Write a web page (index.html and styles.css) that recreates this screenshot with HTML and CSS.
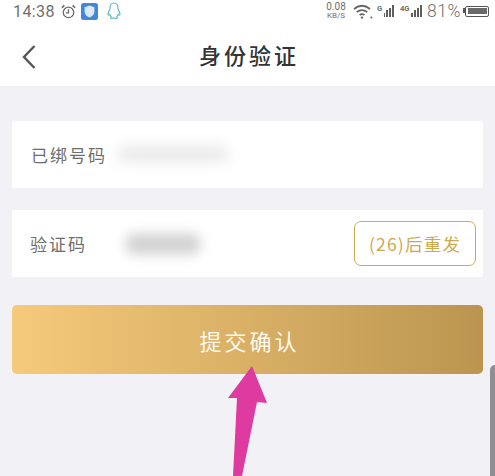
FILE: index.html
```html
<!DOCTYPE html>
<html lang="zh">

<head>
    <meta charset="UTF-8">
    <meta name="viewport" content="width=device-width, initial-scale=1.0">
    <title>身份验证</title>
    <link rel="stylesheet" href="styles.css">
</head>

<body>
    <div class="top">
        <div class="status-bar">
            <div class="status-left">
                <span class="time">14:38</span>
                <svg class="icon-alarm" viewBox="0 0 16 16" width="15" height="15" fill="none" stroke="#6b6b6b" stroke-width="1.4">
                    <circle cx="8" cy="9" r="5.6"/>
                    <path d="M8 5.6V9.4H5.4"/>
                    <path d="M1 4 3.6 1.4M15 4 12.4 1.4" stroke-width="1.8"/>
                </svg>
                <svg class="icon-shield" viewBox="0 0 17 17" width="17" height="17">
                    <rect width="17" height="17" rx="2.5" fill="#3f88dc"/>
                    <path d="M8.5 2.6 13.4 4.2V8.6C13.4 11.5 11.2 13.5 8.5 14.6 5.8 13.5 3.6 11.5 3.6 8.6V4.2Z" fill="#dbe8f8"/>
                </svg>
                <svg class="icon-qq" viewBox="0 0 16 18" width="16" height="18" fill="none" stroke="#5fb6bd" stroke-width="1.1">
                    <path d="M8 1C5.2 1 4 3.2 4 5.6V7.4C3 8.8 2 10.6 2 12.2 2 13.4 2.8 13.4 3.8 12.4 4.2 13.4 4.6 14 5.2 14.6 4.2 15.2 4.4 16.4 6 16.4 7 16.4 7.6 16.2 8 15.8 8.4 16.2 9 16.4 10 16.4 11.6 16.4 11.8 15.2 10.8 14.6 11.4 14 11.8 13.4 12.2 12.4 13.2 13.4 14 13.4 14 12.2 14 10.6 13 8.8 12 7.4V5.6C12 3.2 10.8 1 8 1Z"/>
                </svg>
            </div>
            <div class="status-right">
                <div class="speed"><span>0.08</span><span class="speed-unit">KB/S</span></div>
                <svg class="icon-wifi" viewBox="0 0 20 15" width="20" height="15" fill="none" stroke="#666" stroke-width="1.8">
                    <path d="M1 5C6 1 12 1 17 5"/>
                    <path d="M3.8 8C7 5.6 11 5.6 14.2 8"/>
                    <path d="M6.6 11C8 10 10 10 11.4 11"/>
                    <circle cx="9" cy="13.6" r="1.2" fill="#666" stroke="none"/>
                    <circle cx="18.4" cy="13.6" r="1" fill="#666" stroke="none"/>
                </svg>
                <div class="signal signal-g">
                    <span class="signal-tag">G</span>
                    <i class="b1"></i><i class="b2"></i><i class="b3"></i><i class="b4"></i>
                </div>
                <div class="signal signal-4g">
                    <span class="signal-tag">4G</span>
                    <i class="b1"></i><i class="b2"></i><i class="b3"></i><i class="b4"></i>
                </div>
                <span class="percent">81%</span>
                <div class="battery"><div class="battery-fill"></div></div>
            </div>
        </div>

        <div class="title-bar">
            <svg class="back" viewBox="0 0 16 26" width="16" height="26" fill="none" stroke="#555" stroke-width="2.4">
                <path d="M13.5 2 3 13 13.5 24"/>
            </svg>
            <h1>身份验证</h1>
        </div>
    </div>

    <div class="content">
        <div class="card">
            <span class="label">已绑号码</span>
            <div class="blur-phone"></div>
        </div>

        <div class="card card-code">
            <span class="label">验证码</span>
            <div class="blur-code"></div>
            <button class="resend">(26)后重发</button>
        </div>

        <button class="submit">提交确认</button>
    </div>

    <div class="scrollbar"></div>

    <!-- annotation arrow drawn over the page -->
    <svg class="arrow" viewBox="0 0 495 476" width="495" height="476">
        <path d="M252 366 267 403 257 402 242 476H233L237 398 228 398Z" fill="#de3a9f"/>
    </svg>
</body>

</html>
```

FILE: styles.css
```css
* {
    box-sizing: border-box;
}

html,
body {
    height: 100%;
}

body {
    margin: 0;
    position: relative;
    overflow: hidden;
    background-color: #f1f1f6;
    font-family: "Noto Sans CJK SC", "Liberation Sans", sans-serif;
}

.top {
    height: 87px;
    background-color: white;
    border-bottom: 1px solid #ececf0;
}

.status-bar {
    height: 22px;
    padding: 0 6px 0 13px;
    display: flex;
    justify-content: space-between;
    align-items: center;
    color: #6f6f6f;
}

.status-left {
    display: flex;
    align-items: center;
    gap: 5px;
}

.time {
    font-family: "Roboto", sans-serif;
    font-size: 16px;
    letter-spacing: 0.4px;
}

.icon-alarm {
    margin-left: 1px;
}

.icon-qq {
    margin-left: 3px;
}

.status-right {
    display: flex;
    align-items: center;
}

.speed {
    display: flex;
    flex-direction: column;
    align-items: center;
    width: 22px;
    margin-right: 6px;
    font-family: "Roboto", sans-serif;
    font-size: 10px;
    line-height: 9px;
}

.speed-unit {
    font-size: 8px;
}

.icon-wifi {
    margin-right: 4px;
}

.signal {
    display: flex;
    align-items: flex-end;
    gap: 1px;
    height: 12px;
    justify-content: flex-end;
}

.signal-g {
    width: 17px;
    margin-right: 6px;
}

.signal-4g {
    width: 22px;
    margin-right: 5px;
}

.signal-tag {
    align-self: flex-start;
    margin-right: 0.5px;
    font-family: "Roboto", sans-serif;
    font-size: 7.5px;
    font-weight: 700;
    line-height: 7px;
}

.signal i {
    width: 2.2px;
    background-color: #5f5f5f;
}

.signal .b1 { height: 4px; }
.signal .b2 { height: 7px; }
.signal .b3 { height: 9px; }
.signal .b4 { height: 12px; }

.percent {
    width: 33px;
    margin-right: 5px;
    font-family: "Roboto", sans-serif;
    font-size: 17.5px;
    font-weight: 300;
    letter-spacing: 0.5px;
    white-space: nowrap;
}

.battery {
    position: relative;
    width: 24px;
    height: 11px;
    border: 1.5px solid #555;
    border-radius: 2px;
    padding: 1.5px;
}

/* battery terminal sits on the left on this phone */
.battery::before {
    content: "";
    position: absolute;
    left: -3.5px;
    top: 1.5px;
    width: 2px;
    height: 5px;
    background-color: #555;
}

.battery-fill {
    width: 100%;
    height: 100%;
    background-color: #6a6a6a;
}

.title-bar {
    height: 64px;
    display: flex;
    align-items: center;
    justify-content: center;
    position: relative;
    padding-left: 3px;
}

.back {
    position: absolute;
    left: 21px;
    top: 22px;
}

h1 {
    margin: 0;
    font-size: 22px;
    font-weight: 500;
    letter-spacing: 3px;
    color: #333;
}

.content {
    padding: 34px 12px 0;
}

.card {
    height: 67px;
    background-color: white;
    border-radius: 2px;
    display: flex;
    align-items: center;
    padding-left: 19px;
    padding-bottom: 1px;
    position: relative;
}

.card-code {
    margin-top: 22px;
    padding-left: 18px;
    padding-bottom: 0;
}

.label {
    font-size: 17px;
    letter-spacing: 2px;
    color: #6e6e6e;
}

.blur-phone {
    width: 112px;
    height: 16px;
    margin-left: 10px;
    background-color: #e9e9e9;
    border-radius: 8px;
    filter: blur(7px);
}

.blur-code {
    width: 76px;
    height: 22px;
    margin-left: 38px;
    background-color: #d4d4d4;
    border-radius: 10px;
    filter: blur(6px);
}

.resend {
    margin-left: auto;
    margin-right: 7px;
    width: 122px;
    height: 45px;
    padding: 0;
    background-color: white;
    border: 1.5px solid #d0aa50;
    border-radius: 7px;
    font-family: "Noto Sans CJK SC", sans-serif;
    font-size: 17.5px;
    letter-spacing: 1.2px;
    color: #cfa94f;
}

.submit {
    display: block;
    width: 100%;
    height: 69px;
    margin-top: 28px;
    padding: 0 0 0 4px;
    border: none;
    border-radius: 5px;
    background: linear-gradient(90deg, #f6ca7c, #bb954f);
    font-family: "Noto Sans CJK SC", sans-serif;
    font-size: 22px;
    letter-spacing: 3px;
    color: #fff8ec;
}

.scrollbar {
    position: absolute;
    left: 490px;
    top: 365px;
    width: 5px;
    height: 111px;
    background-color: #8f8f93;
    border-top-left-radius: 5px;
}

.arrow {
    position: absolute;
    left: 0;
    top: 0;
}
```
